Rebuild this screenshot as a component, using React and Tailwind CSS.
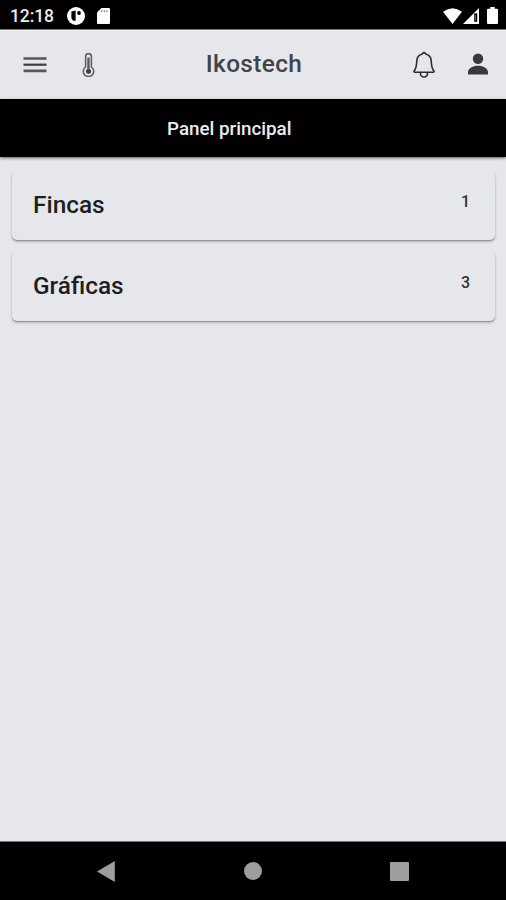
import React from 'react';

const sections = [
  { name: 'Fincas', count: 1 },
  { name: 'Gráficas', count: 3 },
];

const StatusBar = () => {
  return (
    <div className="flex h-[30px] items-center justify-between border-b border-[#77777b] bg-black pl-[10px] pr-2 text-white">
      <div className="flex items-center">
        <span className="w-[57px] pt-[3px] text-[17.5px] leading-5 font-medium tracking-[-0.1px] whitespace-nowrap text-[#ececec]">12:18</span>
        <svg className="mt-[2px] h-[18px] w-[18px]" viewBox="0 0 18 18">
          <circle cx="9" cy="9" r="9" fill="#fff" />
          <path d="M4.4 4.5 8.6 3.6v10.2H6.2A6 6 0 0 1 4.4 11z" fill="#000" />
          <circle cx="12" cy="6" r="1.9" fill="#000" />
        </svg>
        <svg className="mt-[2px] ml-3 h-4 w-[13px]" viewBox="0 0 13 16">
          <path d="M4.5 0H12a1 1 0 0 1 1 1v14a1 1 0 0 1-1 1H1a1 1 0 0 1-1-1V4.5z" fill="#fff" />
          <path d="M4.8 2v2.2M7.3 2v2.2M9.8 2v2.2" stroke="#888" strokeWidth="1.1" />
        </svg>
      </div>
      <div className="flex items-center pt-[2px]">
        <svg className="h-4 w-[19px]" viewBox="0 0 19 16">
          <path d="M0 3.8Q9.5-3.2 19 3.8L9.5 16z" fill="#fff" />
        </svg>
        <svg className="ml-[1px] h-4 w-4" viewBox="0 0 16 16">
          <path d="M16 0v16H0z" fill="#fff" />
          <path d="M11.2 5.4h3v8.4h-3z" fill="#000" />
          <path d="M12.2 7h.8v5.4h-.8z" fill="#777" />
        </svg>
        <svg className="ml-2 h-[17px] w-[11px]" viewBox="0 0 11 17">
          <path d="M3.3 0h4.4v1.7H10a1 1 0 0 1 1 1V16a1 1 0 0 1-1 1H1a1 1 0 0 1-1-1V2.7a1 1 0 0 1 1-1h2.3z" fill="#fff" />
        </svg>
      </div>
    </div>
  );
};

const Header = () => {
  return (
    <header className="grid h-[69px] grid-cols-[1fr_auto_1fr] items-center border-y border-[#f2f3f5] pr-[18px] pl-[23px]">
      <div className="flex items-center">
        <svg className="h-[18px] w-6" viewBox="0 0 24 18" stroke="#56575a" strokeWidth="2.6">
          <path d="M.5 2.5h23M.5 14.9h23" />
          <path d="M.5 8.7h23" stroke="#3c3d40" strokeWidth="2.2" />
        </svg>
        <svg className="ml-[35px] h-6 w-[13px]" viewBox="0 0 13 24" fill="none" stroke="#5a5b5e">
          <path d="M3.6 14V3.6a2.9 2.9 0 0 1 5.8 0V14a5.2 5.2 0 1 1-5.8 0z" strokeWidth="1.5" />
          <circle cx="6.5" cy="18.2" r="2.5" fill="#38393c" stroke="none" />
          <path d="M6.5 4.5v13" strokeWidth="2.4" />
        </svg>
      </div>
      <h1 className="mr-[3px] pb-px text-[24.4px] leading-8 font-medium tracking-[0.35px] text-[#434448]">Ikostech</h1>
      <div className="flex items-center justify-end">
        <svg className="h-7 w-[22px]" viewBox="0 0 22 28" fill="none" stroke="#2c2d30" strokeWidth="1.6" strokeLinejoin="round">
          <path d="M11 1.6c-.9 0-1.4.7-1.6 1.4C6 3.8 4 6.5 3.8 9.7c-.2 6-1 8.2-2.6 10.1-.5.7-.2 1.5.6 1.5h18.4c.8 0 1.1-.8.6-1.5-1.6-1.9-2.4-4.1-2.6-10.1C18 6.5 16 3.8 12.6 3c-.2-.7-.7-1.4-1.6-1.4z" />
          <path d="M7.5 21.5v1a3.5 3.5 0 0 0 7 0v-1" />
        </svg>
        <svg className="mb-px ml-[33px] h-[22px] w-5" viewBox="0 0 20 22" fill="#38393c">
          <circle cx="10" cy="5.7" r="5.2" />
          <path d="M0 21.5v-2.2c0-4 5-6.5 10-6.5s10 2.5 10 6.5v2.2z" />
        </svg>
      </div>
    </header>
  );
};

const SectionCard = ({ name, count }) => {
  return (
    <div className="flex h-[70px] justify-between rounded-[5px] bg-[#e6e7eb] pt-[19px] pr-[25px] pl-[21px] shadow-[0_1px_1px_rgba(0,0,0,0.25),0_2px_3px_rgba(0,0,0,0.2)]">
      <h2 className="text-[24.4px] leading-8 font-medium text-[#1e1f22]">{name}</h2>
      <span className="pt-[3px] text-[16px] leading-5 font-medium text-[#333437]">{count}</span>
    </div>
  );
};

const NavigationBar = () => {
  return (
    <nav className="flex h-[59px] items-center justify-between border-t border-[#77777b] bg-black pr-[97px] pl-[97px]">
      <svg className="h-[21px] w-[18px]" viewBox="0 0 18 21" fill="#9d9d9d">
        <path d="M17.8 0v21L0 10.5z" />
      </svg>
      <div className="h-[18px] w-[18px] rounded-full bg-[#9d9d9d]" />
      <div className="h-[19px] w-[19px] rounded-[1px] bg-[#9d9d9d]" />
    </nav>
  );
};

const App = () => {
  return (
    <div className="flex h-[900px] w-[506px] flex-col overflow-hidden bg-[#e6e7eb] font-['Roboto',sans-serif]">
      <StatusBar />
      <Header />
      <div className="flex h-[58px] items-center bg-black pt-px pl-[167px] shadow-[0_1px_3px_rgba(0,0,0,0.6)]">
        <p className="text-[18.8px] leading-6 font-medium whitespace-nowrap text-[#ececec]">Panel principal</p>
      </div>
      <main className="flex flex-1 flex-col gap-[11px] pt-[13px] pr-[11px] pl-3">
        {sections.map((section) => (
          <SectionCard key={section.name} name={section.name} count={section.count} />
        ))}
      </main>
      <NavigationBar />
    </div>
  );
};

export default App;
